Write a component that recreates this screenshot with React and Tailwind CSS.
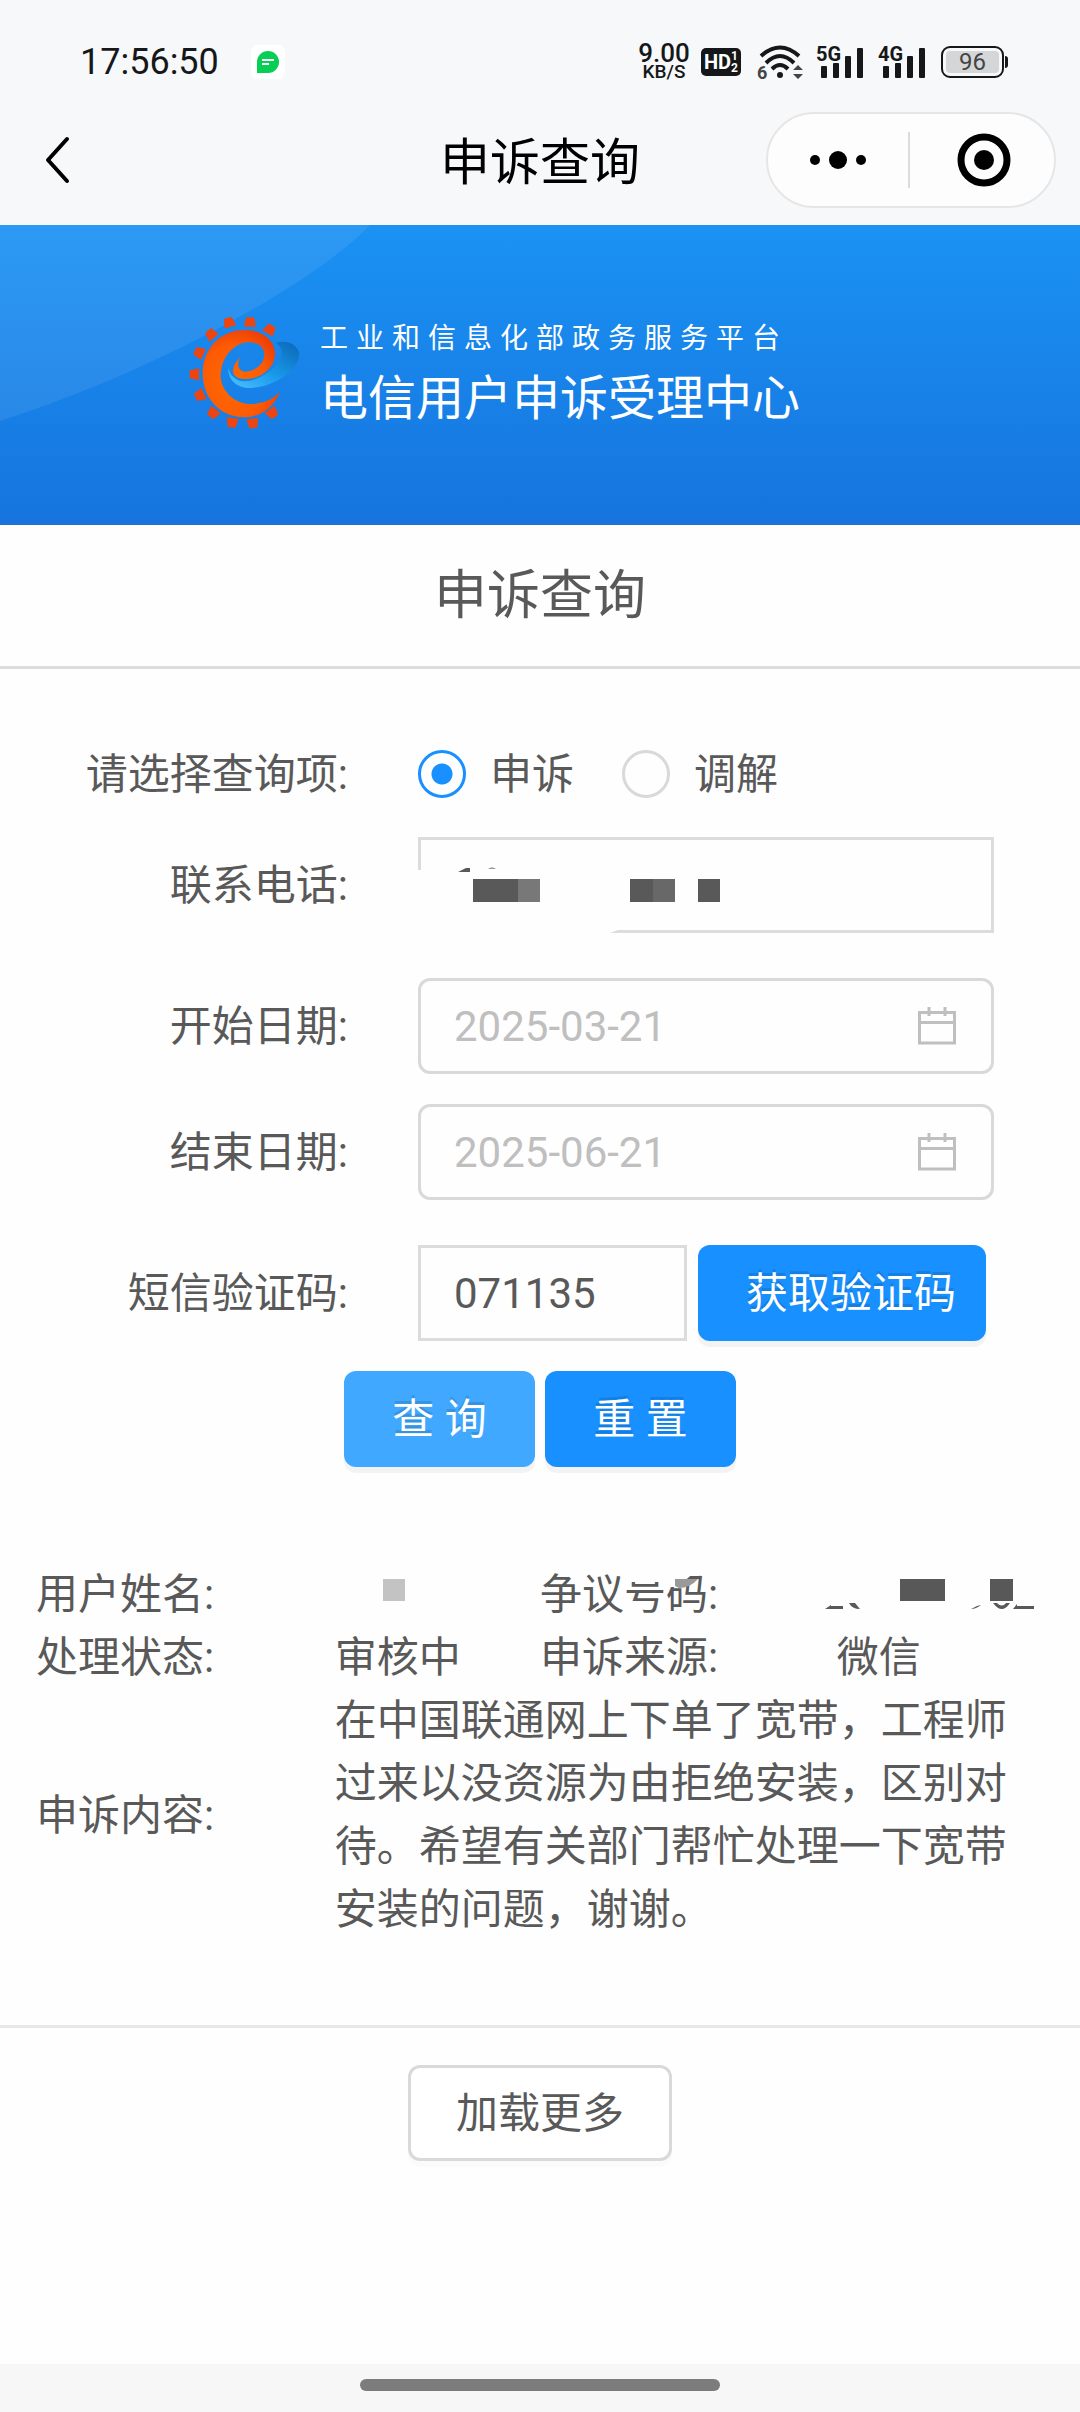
import React, { useState } from 'react';

const LOGO_TEETH = [
  [268, 76, 32],
  [210, 54, 4],
  [148, 55, -16],
  [95, 90, -40],
  [60, 144, -66],
  [46, 208, -90],
  [62, 270, -115],
  [101, 322, -142],
  [157, 350, -172],
  [218, 352, -190],
  [275, 322, -216],
];

const Logo = () => (
  <svg viewBox="0 0 390 390" className="w-[130px] h-[130px] shrink-0" aria-hidden="true">
    <defs>
      <radialGradient id="logoOrange" cx="0.4" cy="0.6" r="0.7">
        <stop offset="0" stopColor="#ff6a00" />
        <stop offset="0.6" stopColor="#fd5b04" />
        <stop offset="1" stopColor="#ea3a08" />
      </radialGradient>
      <linearGradient id="logoBlue" x1="0" y1="1" x2="1" y2="0">
        <stop offset="0" stopColor="#4cc3ff" />
        <stop offset="0.45" stopColor="#1a9bec" />
        <stop offset="1" stopColor="#0a66b4" />
      </linearGradient>
    </defs>
    {LOGO_TEETH.map(([x, y, angle]) => (
      <path
        key={`${x}-${y}`}
        d="M-12 -17 L12 -17 L18 11 L-18 11 Z"
        fill="#ee4410"
        transform={`translate(${x} ${y}) rotate(${angle})`}
      />
    ))}
    <path
      d="M145 186 C142 225 172 251 215 249 C290 244 361 190 357 145 C352 118 320 104 288 113 C312 130 310 162 285 185 C250 218 203 238 172 224 C156 215 148 204 145 186 Z"
      fill="url(#logoBlue)"
    />
    <path
      d="M300 260 C280 310 240 337 190 337 C115 335 68 275 68 205 C68 130 122 75 195 75 C250 75 287 108 285 150 C282 192 240 222 197 222 C152 222 148 190 180 156 C166 185 180 206 207 199 C240 190 257 165 252 140 C246 115 215 106 185 115 C145 130 121 172 122 215 C126 268 175 300 220 297 C255 293 280 282 300 260 Z"
      fill="url(#logoOrange)"
    />
  </svg>
);

const WifiIcon = () => (
  <svg viewBox="0 0 48 36" className="w-12 h-9 overflow-visible" fill="none" stroke="#161718" strokeWidth="4">
    <path d="M4 12 Q23 -5 42 12" />
    <path d="M9 19 Q23 5 37 19" />
    <path d="M15 25 Q23 17 31 25" />
    <circle cx="23" cy="31" r="3" fill="#161718" stroke="none" />
    <path d="M41 21 L46 26 H36 Z M41 35 L46 30 H36 Z" fill="#444" stroke="none" />
    <text x="0" y="35" fontSize="18" fontWeight="700" fontFamily="Roboto" fill="#444" stroke="none">6</text>
  </svg>
);

const SignalIcon = ({ label }) => (
  <svg viewBox="0 0 46 34" className="w-[46px] h-[34px] overflow-visible" fill="#161718">
    <text x="-1" y="16" fontSize="20" fontWeight="700" fontFamily="Roboto">{label}</text>
    <rect x="4" y="21" width="6" height="12" rx="1" />
    <rect x="16" y="18" width="6" height="15" rx="1" />
    <rect x="28" y="11" width="6" height="22" rx="1" />
    <rect x="40" y="3" width="6" height="30" rx="1" />
  </svg>
);

const StatusBar = () => (
  <div className="flex items-center h-28 pt-3 pl-20 pr-[72px] text-[#161718]">
    <span className="text-[36px] leading-[40px]">17:56:50</span>
    <svg viewBox="0 0 34 34" className="ml-8 w-[34px] h-[34px]">
      <rect width="34" height="34" rx="7" fill="#fff" />
      <path d="M6 28 V17 A11 11 0 1 1 17 28 Z" fill="#07cf55" />
      <path d="M11 15 H23 M11 19 H18" stroke="#fff" strokeWidth="2" />
    </svg>
    <div className="ml-auto flex items-center">
      <div className="flex flex-col items-center font-medium w-[50px]">
        <span className="text-[26px] leading-[20px]">9.00</span>
        <span className="text-[19px] leading-[18px]">KB/S</span>
      </div>
      <div className="ml-3 flex items-center justify-center w-10 h-7 rounded-[5px] bg-[#161718] text-white font-bold">
        <span className="text-[20px] leading-[28px]">HD</span>
        <span className="flex flex-col text-[12px] leading-[12px]">
          <span>1</span>
          <span>2</span>
        </span>
      </div>
      <div className="ml-4"><WifiIcon /></div>
      <div className="ml-3"><SignalIcon label="5G" /></div>
      <div className="ml-4"><SignalIcon label="4G" /></div>
      <div className="ml-4 flex items-center">
        <div className="w-[63px] h-8 rounded-[9px] border-2 border-[#161718] p-[3px]">
          <div className="h-full rounded-[4px] bg-[#d5d6d8] flex items-center justify-center text-[24px] leading-[22px] text-[#444]">
            96
          </div>
        </div>
        <div className="ml-px w-[3px] h-3 rounded-r bg-[#161718]" />
      </div>
    </div>
  </div>
);

const NavBar = () => (
  <header className="grid grid-cols-[1fr_auto_1fr] items-center pb-[17px]">
    <button type="button" aria-label="返回" className="ml-[42px] w-8 h-12">
      <svg viewBox="0 0 32 48" className="w-8 h-12" fill="none" stroke="#000" strokeWidth="4" strokeLinecap="round" strokeLinejoin="round">
        <path d="M25 3 L6 24 L25 45" />
      </svg>
    </button>
    <h1 className="pt-1.5 text-[50px] leading-[72px] text-black">申诉查询</h1>
    <div className="justify-self-end mr-6 flex items-center w-[290px] h-24 rounded-full border-2 border-[#e6e6e7] bg-[#fdfdfd]">
      <button type="button" aria-label="更多" className="flex-1 flex items-center justify-center">
        <svg viewBox="0 0 60 20" className="w-[60px] h-5">
          <circle cx="7" cy="10" r="5" />
          <circle cx="30" cy="10" r="9" />
          <circle cx="53" cy="10" r="5" />
        </svg>
      </button>
      <span className="w-0.5 h-14 bg-[#dcdcdc]" />
      <button type="button" aria-label="关闭" className="flex-1 flex items-center justify-center pl-1">
        <svg viewBox="0 0 54 54" className="w-[54px] h-[54px]">
          <circle cx="27" cy="27" r="23" fill="none" stroke="#000" strokeWidth="7" />
          <circle cx="27" cy="27" r="10" />
        </svg>
      </button>
    </div>
  </header>
);

const Banner = () => (
  <div className="relative h-[300px] border-b border-[#2c6fc0] bg-linear-to-b from-[#1b92f4] to-[#1674de]">
    <svg viewBox="0 0 370 196" className="absolute left-0 top-0 w-[370px] h-[196px]" aria-hidden="true">
      <path d="M0 0 H370 C310 62 150 148 0 196 Z" fill="#fff" fillOpacity="0.08" />
    </svg>
    <div className="relative flex pl-[180px] pt-20">
      <Logo />
      <div className="ml-[10px] pt-3.5 text-white whitespace-nowrap">
        <p className="text-[28px] leading-[40px] tracking-[8px]">工业和信息化部政务服务平台</p>
        <p className="mt-1 text-[48px] leading-[72px]">电信用户申诉受理中心</p>
      </div>
    </div>
  </div>
);

const FormRow = ({ label, htmlFor, children, className = '' }) => (
  <div className={`flex items-center h-24 ${className}`}>
    <label htmlFor={htmlFor} className="w-[348px] shrink-0 text-right">{label}:</label>
    <div className="relative ml-[70px] mr-[86px] flex-1 min-w-0 flex items-center h-24">{children}</div>
  </div>
);

const RadioOption = ({ value, current, onChange }) => (
  <label className="flex items-center">
    <input
      type="radio"
      name="queryType"
      value={value}
      checked={current === value}
      onChange={() => onChange(value)}
      className="appearance-none w-12 h-12 rounded-full border-3 border-[#d9d9d9] checked:border-[#1890ff] checked:bg-[radial-gradient(circle,#1890ff_10px,transparent_11px)]"
    />
    <span className="ml-6">{value}</span>
  </label>
);

const DateField = ({ id, placeholder }) => (
  <div className="flex items-center w-full h-24 pl-[33px] pr-[35px] border-3 border-[#d9d9d9] rounded-[12px]">
    <input id={id} type="text" placeholder={placeholder} className="flex-1 min-w-0 placeholder-[#bfbfbf] focus:outline-none" />
    <svg viewBox="0 0 38 38" className="w-[38px] h-[38px] shrink-0" fill="none" stroke="#bfbfbf" strokeWidth="3">
      <path d="M1.5 5.5 H36.5 V36 H1.5 Z M1.5 15.5 H36.5 M11 0 V9 M27 0 V9" />
    </svg>
  </div>
);

const primaryButton =
  'h-24 rounded-[12px] text-white shadow-[0_6px_0_rgba(0,0,0,0.045)] [text-shadow:0_-3px_0_rgba(0,0,0,0.12)]';

const QueryForm = () => {
  const [queryType, setQueryType] = useState('申诉');
  const [phone, setPhone] = useState('');
  const [code, setCode] = useState('071135');

  return (
    <form className="pt-[57px]" onSubmit={(e) => e.preventDefault()}>
      <FormRow label="请选择查询项">
        <div className="flex gap-12">
          <RadioOption value="申诉" current={queryType} onChange={setQueryType} />
          <RadioOption value="调解" current={queryType} onChange={setQueryType} />
        </div>
      </FormRow>

      <FormRow label="联系电话" htmlFor="phone" className="mt-[15px]">
        <input
          id="phone"
          type="text"
          value={phone}
          onChange={(e) => setPhone(e.target.value)}
          className="w-full h-24 px-[33px] border-3 border-[#dcdcdc] focus:outline-none"
        />
        {/* masked number */}
        <svg viewBox="0 0 320 96" className="absolute left-0 top-0 w-80 h-24 pointer-events-none" aria-hidden="true">
          <path d="M0 33 H60 V96 H0 Z M0 90 H208 L192 96 H0 Z" fill="#fefefe" />
          <path d="M40 35 L48 31 H52 V35 Z M70 32 Q74 29 78 32 Q74 31 70 32 Z" fill="#595959" />
          <path d="M55 42 H100 V65 H55 Z M212 42 H235 V65 H212 Z M280 42 H302 V65 H280 Z" fill="#595959" />
          <rect x="100" y="42" width="22" height="23" fill="#787878" />
          <rect x="235" y="42" width="22" height="23" fill="#686868" />
        </svg>
      </FormRow>

      <FormRow label="开始日期" htmlFor="startDate" className="mt-[45px]">
        <DateField id="startDate" placeholder="2025-03-21" />
      </FormRow>

      <FormRow label="结束日期" htmlFor="endDate" className="mt-[30px]">
        <DateField id="endDate" placeholder="2025-06-21" />
      </FormRow>

      <FormRow label="短信验证码" htmlFor="code" className="mt-[45px]">
        <input
          id="code"
          type="text"
          value={code}
          onChange={(e) => setCode(e.target.value)}
          className="w-[269px] h-24 px-[33px] border-3 border-[#dcdcdc] focus:outline-none"
        />
        <button type="button" className={`ml-[11px] pl-12 pr-[30px] whitespace-nowrap bg-[#1890ff] ${primaryButton}`}>
          获取验证码
        </button>
      </FormRow>

      <div className="mt-[30px] flex justify-center gap-2.5">
        <button type="submit" className={`w-[191px] bg-[#40a9ff] ${primaryButton}`}>查 询</button>
        <button type="reset" className={`w-[191px] bg-[#1890ff] ${primaryButton}`}>重 置</button>
      </div>
    </form>
  );
};

const ResultTable = () => (
  <table className="mt-24 w-full table-fixed text-left leading-[63px]">
    <colgroup>
      <col className="w-[31%]" />
      <col className="w-[19%]" />
      <col className="w-[26%]" />
      <col className="w-[24%]" />
    </colgroup>
    <tbody>
      <tr>
        <th className="pl-9 font-normal">用户姓名:</th>
        <td className="align-top pt-4">
          <svg viewBox="0 0 80 22" className="ml-12 w-20 h-[22px]" aria-hidden="true">
            <rect width="22" height="22" fill="#c3c3c3" />
          </svg>
        </td>
        <th className="relative font-normal">
          争议号码:
          <svg viewBox="0 0 90 30" className="absolute left-[84px] top-1 w-[90px] h-[30px]" aria-hidden="true">
            <path d="M0 0 H76 L54 20 H42 V15 H0 Z" fill="#fefefe" />
            <path d="M51 12 H74 Q66 21 55 21 L51 19 Z" fill="#999" />
          </svg>
        </th>
        <td className="align-top pt-4">
          <svg viewBox="0 2 214 34" className="w-[214px] h-[34px]" aria-hidden="true">
            <path d="M79 2 H124 V24 H79 Z M169 2 H192 V24 H169 Z" fill="#585858" />
            <path
              d="M4 32 L10 28 V29 H22 V32 Z M28 26 Q31 32 39 32 L34 26 Z M150 32 Q155 32 160 28 L156 29 Z M172 26 Q181 38 189 26 H185 Q181 31 176 26 Z M192 32 L196 27 V29 H213 V32 Z"
              fill="#595959"
            />
          </svg>
        </td>
      </tr>
      <tr>
        <th className="pl-9 font-normal">处理状态:</th>
        <td>审核中</td>
        <th className="font-normal">申诉来源:</th>
        <td className="pl-4">微信</td>
      </tr>
      <tr>
        <th className="pl-9 font-normal">申诉内容:</th>
        <td colSpan={3} className="pr-[70px]">
          在中国联通网上下单了宽带，工程师过来以没资源为由拒绝安装，区别对待。希望有关部门帮忙处理一下宽带安装的问题，谢谢。
        </td>
      </tr>
    </tbody>
  </table>
);

const App = () => (
  <div className="flex flex-col min-h-screen bg-[#fefefe] text-[42px] leading-[63px] text-[#595959] font-[Roboto,'Noto_Sans_CJK_SC',sans-serif]">
    <div className="bg-[#f7f8fa]">
      <StatusBar />
      <NavBar />
    </div>

    <Banner />

    <main>
      <h2 className="pt-8 pb-[31px] text-center text-[53px] leading-[78px] border-b-3 border-[#dcdcdc]">
        申诉查询
      </h2>

      <QueryForm />
      <ResultTable />

      <div className="mt-[84px] pt-[37px] flex justify-center border-t-3 border-[#e8e8e8]">
        <button type="button" className="w-[264px] h-24 rounded-[12px] border-3 border-[#d9d9d9] bg-white shadow-[0_6px_0_rgba(0,0,0,0.016)]">
          加载更多
        </button>
      </div>
    </main>

    <footer className="mt-auto h-12 pt-[15px] bg-[#f7f7f7]">
      <div className="mx-auto w-1/3 h-3 rounded-full bg-[#7c7c7c]" />
    </footer>
  </div>
);

export default App;
